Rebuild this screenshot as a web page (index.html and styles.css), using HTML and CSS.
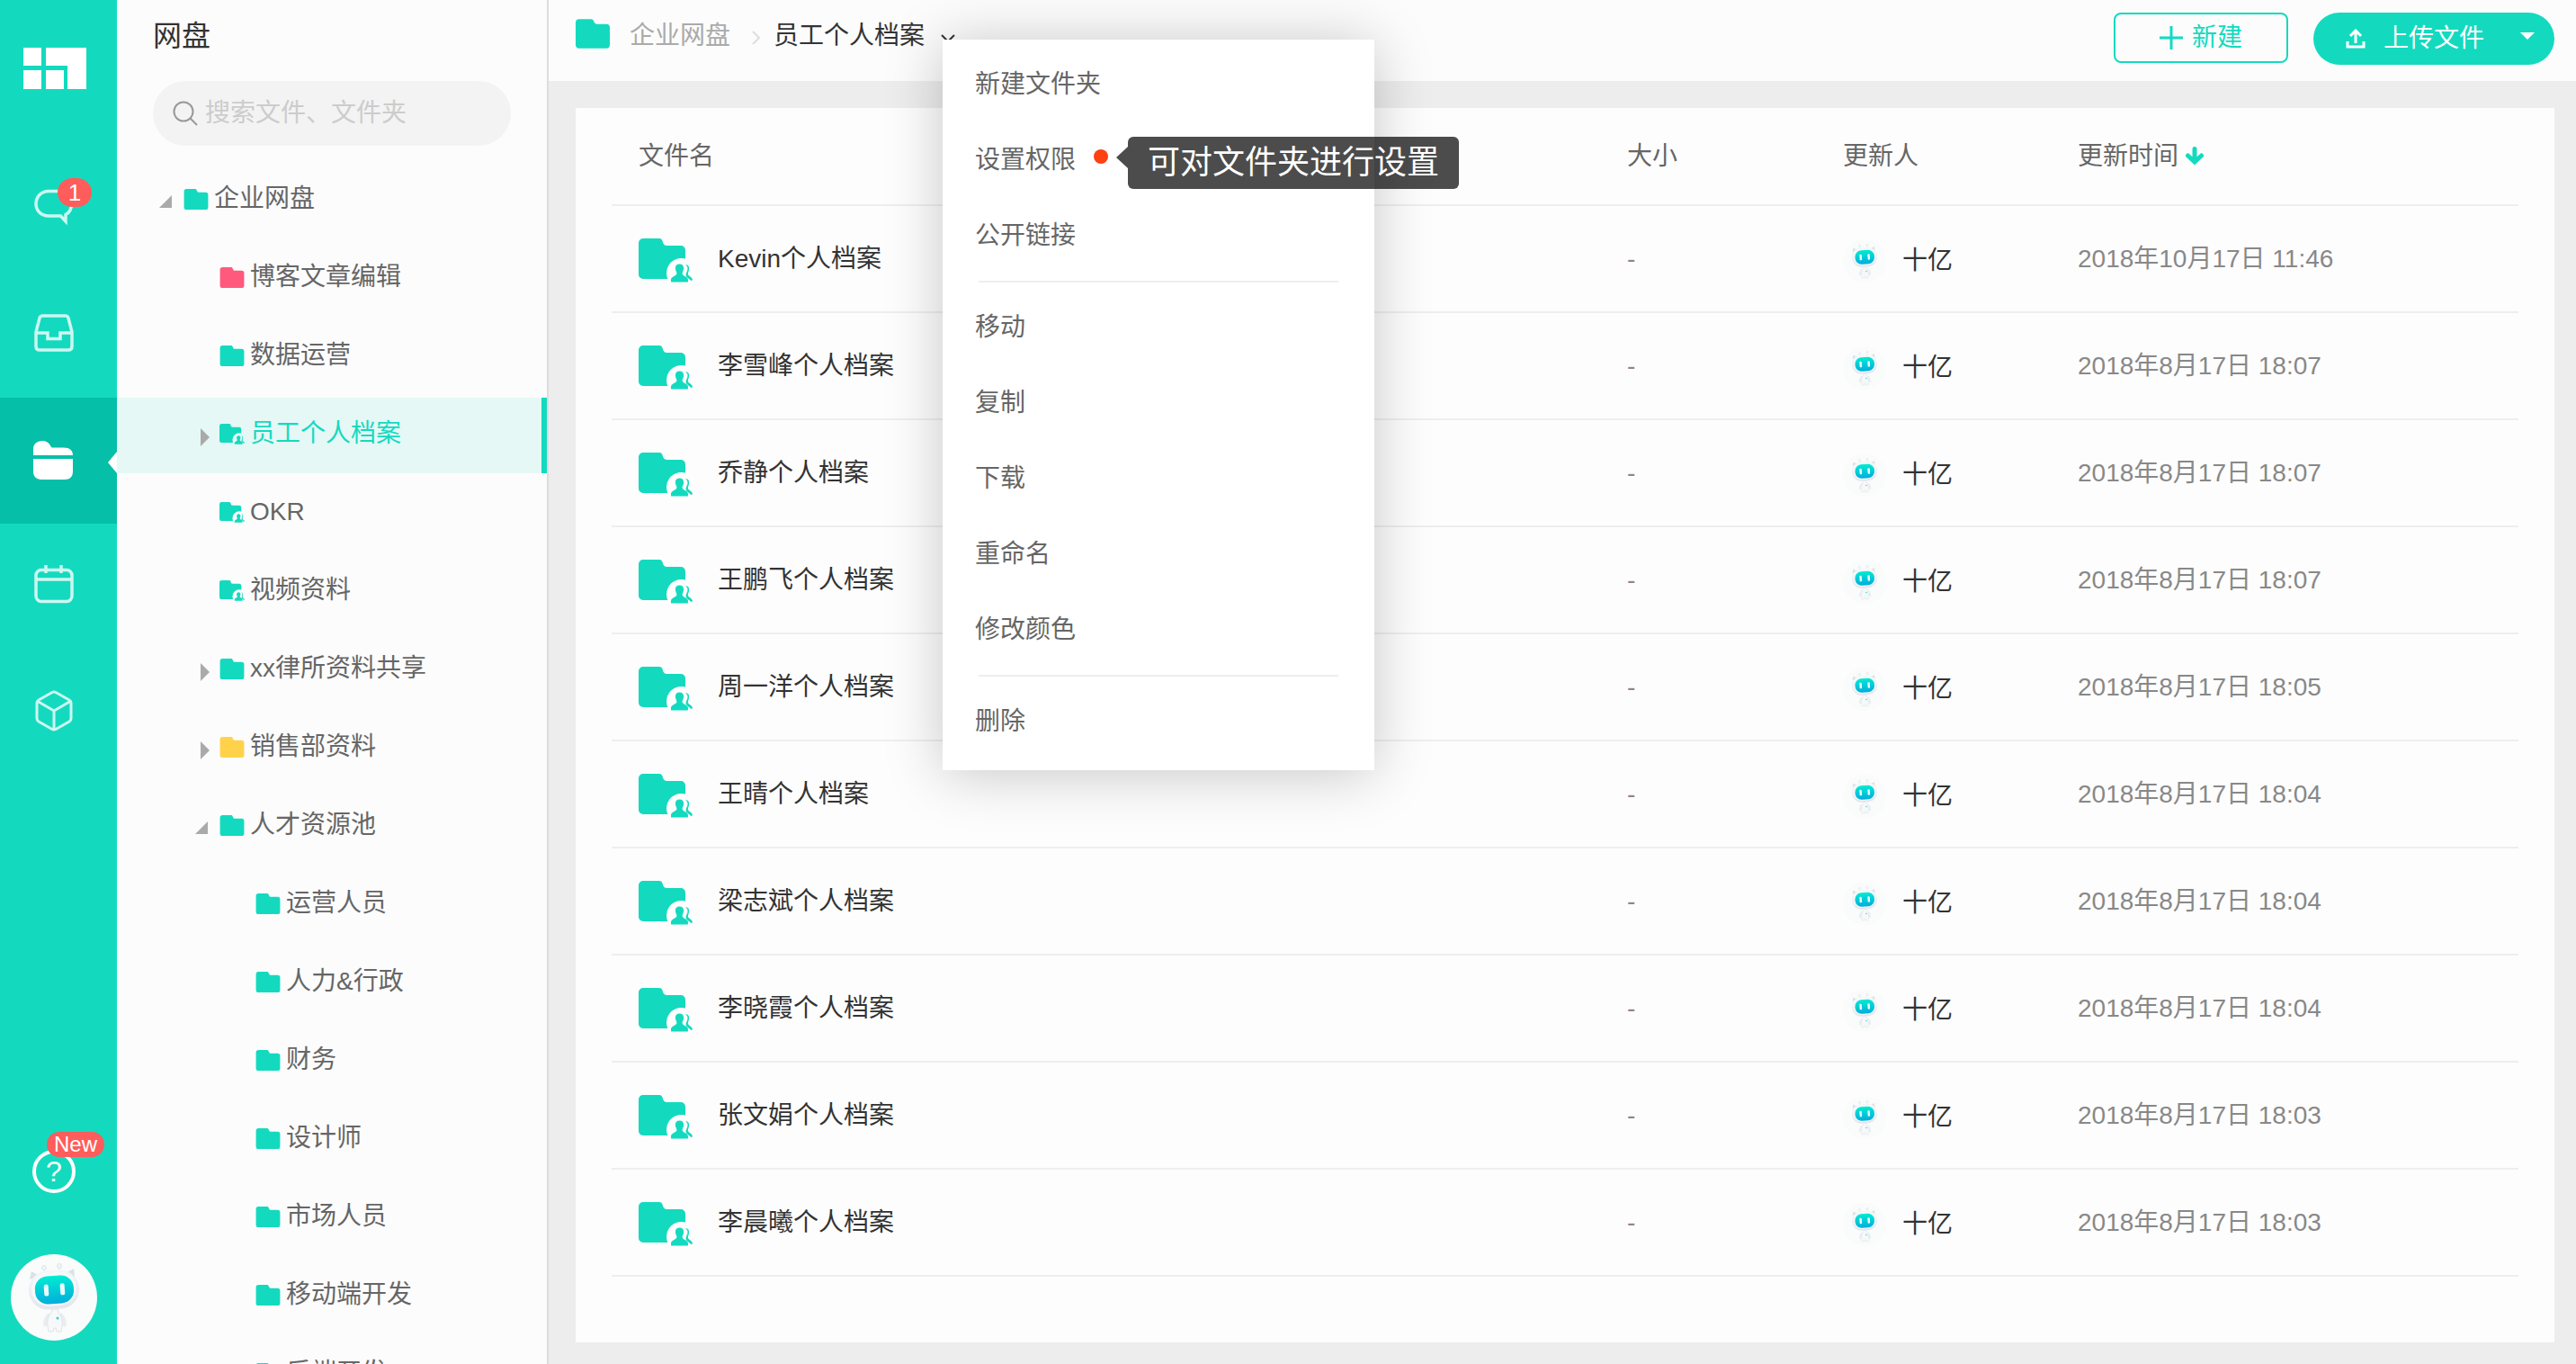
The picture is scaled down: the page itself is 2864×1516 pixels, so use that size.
FILE: index.html
```html
<!DOCTYPE html>
<html lang="zh-CN">
<head>
<meta charset="utf-8">
<meta name="viewport" content="width=device-width, initial-scale=1">
<title>网盘</title>
<link rel="stylesheet" href="styles.css">
</head>
<body>
<svg class="sprite" aria-hidden="true">
  <symbol id="i-folder" viewBox="0 0 28 24">
    <path d="M3 0h9.500c1.500 0 2 .6 2.500 2 .5 1.400 1.200 2 2.500 2H25a3 3 0 0 1 3 3v14a3 3 0 0 1-3 3H3a3 3 0 0 1-3-3V3a3 3 0 0 1 3-3z" fill="currentColor"/>
  </symbol>
  <symbol id="i-shared" viewBox="0 0 60 49">
    <path d="M5 0h18c2 0 3 1 3.700 3.200C27.600 6.500 29 8 31.500 8H47a5 5 0 0 1 5 5v32H5a5 5 0 0 1-5-5V5a5 5 0 0 1 5-5z" fill="currentColor"/>
    <circle class="cut" cx="47.500" cy="38.500" r="16.500"/>
    <path d="M52 29c3.500.2 4.700 2.800 4 6-.4 1.700-1.100 3-1.100 4.600 0 2.400 4.500 2.800 5.100 6.400l-1.500 1.200c-1.900-2.600-6-3.600-6-6.700 0-2.200 2.200-4.300 2-7.200-.1-1.800-.9-3.200-2.500-4.300z" fill="currentColor"/>
    <path d="M45.500 28.500c3.300 0 4.800 2.200 4.600 5-.1 2.200-1.300 3.500-1.500 5-.3 3.600 6.100 3 6.400 7.500 0 1.700 0 2.500-.5 2.500h-18c-.5 0-.6-.8-.5-2.500.3-4.500 6.700-3.900 6.400-7.500-.2-1.500-1.400-2.800-1.500-5-.2-2.800 1.300-5 4.600-5z" fill="currentColor"/>
  </symbol>
  <symbol id="i-open" viewBox="0 0 18 28"><path d="M15 10v14H1z" fill="currentColor"/></symbol>
  <symbol id="i-closed" viewBox="0 0 18 28"><path d="M7 8l10 10L7 28z" fill="currentColor"/></symbol>
  <linearGradient id="face" x1="0" y1="0" x2="0" y2="1">
    <stop offset="0" stop-color="#00ecd2"/><stop offset="1" stop-color="#02addb"/>
  </linearGradient>
  <linearGradient id="head" x1="0" y1="0" x2="0" y2="1">
    <stop offset="0" stop-color="#f4f6f8"/><stop offset="1" stop-color="#e3e6ee"/>
  </linearGradient>
  <symbol id="i-robot" viewBox="0 0 96 96">
    <circle cx="48" cy="48" r="48" fill="#fafbfb"/>
    <g fill="#d9e2e4"><path d="M21 28l2-9 9 5zM71 25l-1-9-9 5z"/></g>
    <g stroke="#e1e5e8" stroke-width="1" fill="#f2f4f6"><path d="M38 21l-1-4M54 18v-4"/><circle cx="37" cy="15" r="2.500"/><circle cx="54" cy="13" r="2.500"/></g>
    <g fill="#e9edf0">
      <ellipse cx="40" cy="73" rx="3" ry="8" transform="rotate(20 40 73)"/>
      <ellipse cx="58" cy="73" rx="3" ry="8" transform="rotate(-20 58 73)"/>
    </g>
    <path d="M46 61h6l1 4c4 4 5 11 4 15l-1 6h-5l-1-4h-2l-1 4h-5l-1-6c-1-4 0-11 4-15z" fill="#f6f8f9" stroke="#dfe4e7"/>
    <circle cx="52" cy="71" r="1.500" fill="#37cfd6"/>
    <g transform="rotate(-4 48 40)">
      <rect x="20" y="18" width="56" height="43" rx="21" fill="url(#head)"/>
      <rect x="23" y="20" width="50" height="37" rx="18" fill="#f7f8fb"/>
      <rect x="27" y="24" width="43" height="31" rx="14" fill="url(#face)"/>
      <rect x="37" y="33" width="5" height="13" rx="2" fill="#eafafe"/>
      <rect x="55" y="33" width="5" height="13" rx="2" fill="#eafafe"/>
    </g>
  </symbol>
</svg>

<div class="app">
  <nav class="rail" aria-label="主导航">
    <a class="logo" href="#" aria-label="首页">
      <svg width="70" height="46" viewBox="0 0 70 46" fill="#fff"><path d="M0 0h20v20H0zM0 25h20v21H0zM25 25h20v21H25zM25 0h45v46H49V20H25z"/></svg>
    </a>
    <a class="rail-item" href="#" aria-label="消息">
      <span class="rail-icon">
        <svg width="48" height="48" viewBox="0 0 48 48" fill="none" stroke="#cdf7f1" stroke-width="3.500"><path d="M18 6.500h12c9 0 13.500 6 13.500 13.500 0 6-2.500 10.500-6.500 12.500V40l-5.500-6H18C9.500 34 4 28 4 20.500S9.500 6.500 18 6.500z"/></svg>
        <span class="badge badge-count">1</span>
      </span>
    </a>
    <a class="rail-item" href="#" aria-label="收件箱">
      <svg width="48" height="48" viewBox="0 0 48 48" fill="none" stroke="#cdf7f1" stroke-width="3.500"><path d="M11.500 5h25c2 0 3 1 3.500 2.500L44 23v16c0 2.500-1.500 4-4 4H8c-2.500 0-4-1.500-4-4V23L8 7.500C8.500 6 9.500 5 11.500 5zM4 24h13v6.500h14V24h13"/></svg>
    </a>
    <a class="rail-item rail-item-active" href="#" aria-label="网盘" aria-current="page">
      <svg width="48" height="48" viewBox="0 0 48 48" fill="#fff"><path d="M1 20V13C1 7.500 5 4 11 4c5 0 7.500 2.500 9.500 6 .5 1 1 1.500 2 1.500H35c6.500 0 10 3 10 8.500zM1 24h44v14c0 6-3.500 9-9 9H10c-6 0-9-3.500-9-9z"/></svg>
    </a>
    <a class="rail-item" href="#" aria-label="日历">
      <svg width="48" height="48" viewBox="0 0 48 48" fill="none" stroke="#cdf7f1" stroke-width="3.500"><rect x="4" y="7.500" width="40" height="35" rx="6"/><path d="M4 18h40M15 2v9M32 2v9"/></svg>
    </a>
    <a class="rail-item" href="#" aria-label="应用">
      <svg width="48" height="48" viewBox="0 0 48 48" fill="none" stroke="#cdf7f1" stroke-width="3" stroke-linejoin="round"><path d="M22 3.500c1.300-.7 2.700-.7 4 0L41 12c1.500 1 2 2 2 3.500v17c0 1.500-.5 2.500-2 3.500l-15 8.500c-1.300.7-2.700.7-4 0L7 36c-1.500-1-2-2-2-3.500v-17C5 14 5.500 13 7 12zM6 13.500L24 24l18-10.500M24 24v20.500"/></svg>
    </a>
    <a class="help" href="#" aria-label="帮助">
      <span class="help-mark">?</span>
      <span class="badge badge-new">New</span>
    </a>
    <a class="me" href="#" aria-label="我的账户"><svg width="96" height="96"><use href="#i-robot"/></svg></a>
  </nav>

  <aside class="sidebar">
    <h1>网盘</h1>
    <label class="search">
      <svg width="28" height="28" viewBox="0 0 28 28" fill="none" stroke="#999" stroke-width="2"><circle cx="12" cy="12" r="10.500"/><path d="M19.500 19.500l7.500 7.500"/></svg>
      <input type="search" placeholder="搜索文件、文件夹" aria-label="搜索文件、文件夹">
    </label>
    <ul class="tree">
      <li><a class="node" href="#"><svg class="twist"><use href="#i-open"/></svg><svg class="ico"><use href="#i-folder"/></svg>企业网盘</a></li>
      <li><a class="node level-1 pink" href="#"><svg class="twist"></svg><svg class="ico"><use href="#i-folder"/></svg>博客文章编辑</a></li>
      <li><a class="node level-1" href="#"><svg class="twist"></svg><svg class="ico"><use href="#i-folder"/></svg>数据运营</a></li>
      <li><a class="node level-1 selected" href="#" aria-current="true"><svg class="twist"><use href="#i-closed"/></svg><svg class="ico"><use href="#i-shared"/></svg>员工个人档案</a></li>
      <li><a class="node level-1" href="#"><svg class="twist"></svg><svg class="ico"><use href="#i-shared"/></svg>OKR</a></li>
      <li><a class="node level-1" href="#"><svg class="twist"></svg><svg class="ico"><use href="#i-shared"/></svg>视频资料</a></li>
      <li><a class="node level-1" href="#"><svg class="twist"><use href="#i-closed"/></svg><svg class="ico"><use href="#i-folder"/></svg>xx律所资料共享</a></li>
      <li><a class="node level-1 yellow" href="#"><svg class="twist"><use href="#i-closed"/></svg><svg class="ico"><use href="#i-folder"/></svg>销售部资料</a></li>
      <li><a class="node level-1" href="#"><svg class="twist"><use href="#i-open"/></svg><svg class="ico"><use href="#i-folder"/></svg>人才资源池</a></li>
      <li><a class="node level-2" href="#"><svg class="twist"></svg><svg class="ico"><use href="#i-folder"/></svg>运营人员</a></li>
      <li><a class="node level-2" href="#"><svg class="twist"></svg><svg class="ico"><use href="#i-folder"/></svg>人力&amp;行政</a></li>
      <li><a class="node level-2" href="#"><svg class="twist"></svg><svg class="ico"><use href="#i-folder"/></svg>财务</a></li>
      <li><a class="node level-2" href="#"><svg class="twist"></svg><svg class="ico"><use href="#i-folder"/></svg>设计师</a></li>
      <li><a class="node level-2" href="#"><svg class="twist"></svg><svg class="ico"><use href="#i-folder"/></svg>市场人员</a></li>
      <li><a class="node level-2" href="#"><svg class="twist"></svg><svg class="ico"><use href="#i-folder"/></svg>移动端开发</a></li>
      <li><a class="node level-2" href="#"><svg class="twist"></svg><svg class="ico"><use href="#i-folder"/></svg>后端开发</a></li>
    </ul>
  </aside>

  <main class="main">
    <header class="topbar">
      <nav class="crumbs" aria-label="路径">
        <svg class="crumb-folder" width="38" height="33"><use href="#i-folder"/></svg>
        <a class="crumb-parent" href="#">企业网盘</a>
        <svg class="crumb-sep" width="10" height="16" viewBox="0 0 10 16" fill="none" stroke="#ddd" stroke-width="2"><path d="M1 1l7 7-7 7"/></svg>
        <div class="crumb-current">
          <button class="crumb-button" type="button" aria-expanded="true">员工个人档案
            <svg width="16" height="10" viewBox="0 0 16 10" fill="none" stroke="#333" stroke-width="2"><path d="M1 1l7 7 7-7"/></svg>
          </button>
          <div class="menu">
            <button type="button">新建文件夹</button>
            <button type="button">设置权限<span class="dot"></span><span class="tip" role="tooltip">可对文件夹进行设置</span></button>
            <button type="button">公开链接</button>
            <hr>
            <button type="button">移动</button>
            <button type="button">复制</button>
            <button type="button">下载</button>
            <button type="button">重命名</button>
            <button type="button">修改颜色</button>
            <hr>
            <button type="button">删除</button>
          </div>
        </div>
      </nav>
      <div class="actions">
        <button class="btn-new" type="button">
          <svg width="26" height="26" viewBox="0 0 26 26" stroke="currentColor" stroke-width="3"><path d="M13 0v26M0 13h26"/></svg>新建
        </button>
        <button class="btn-upload" type="button">
          <svg width="22" height="22" viewBox="0 0 22 22" fill="none" stroke="currentColor" stroke-width="3"><path d="M2 14v6h18v-6M11 16V3M5 8l6-6 6 6"/></svg>
          <span>上传文件</span>
          <svg class="caret" width="16" height="8" viewBox="0 0 16 8" fill="currentColor"><path d="M0 0h16L8 8z"/></svg>
        </button>
      </div>
    </header>

    <section class="panel">
      <table class="files">
        <colgroup><col><col class="col-size"><col class="col-by"><col class="col-time"></colgroup>
        <thead>
          <tr><th class="name">文件名</th><th>大小</th><th>更新人</th><th>更新时间 <svg class="sort" width="20" height="20" viewBox="0 0 20 20" fill="none" stroke="currentColor" stroke-width="5" stroke-linecap="round"><path d="M10 2.500v12M2.500 10l7.500 7 7.500-7"/></svg></th></tr>
        </thead>
        <tbody>
          <tr><td class="name"><a href="#"><svg><use href="#i-shared"/></svg>Kevin个人档案</a></td><td>-</td><td><span class="by"><svg><use href="#i-robot"/></svg>十亿</span></td><td>2018年10月17日 11:46</td></tr>
          <tr><td class="name"><a href="#"><svg><use href="#i-shared"/></svg>李雪峰个人档案</a></td><td>-</td><td><span class="by"><svg><use href="#i-robot"/></svg>十亿</span></td><td>2018年8月17日 18:07</td></tr>
          <tr><td class="name"><a href="#"><svg><use href="#i-shared"/></svg>乔静个人档案</a></td><td>-</td><td><span class="by"><svg><use href="#i-robot"/></svg>十亿</span></td><td>2018年8月17日 18:07</td></tr>
          <tr><td class="name"><a href="#"><svg><use href="#i-shared"/></svg>王鹏飞个人档案</a></td><td>-</td><td><span class="by"><svg><use href="#i-robot"/></svg>十亿</span></td><td>2018年8月17日 18:07</td></tr>
          <tr><td class="name"><a href="#"><svg><use href="#i-shared"/></svg>周一洋个人档案</a></td><td>-</td><td><span class="by"><svg><use href="#i-robot"/></svg>十亿</span></td><td>2018年8月17日 18:05</td></tr>
          <tr><td class="name"><a href="#"><svg><use href="#i-shared"/></svg>王晴个人档案</a></td><td>-</td><td><span class="by"><svg><use href="#i-robot"/></svg>十亿</span></td><td>2018年8月17日 18:04</td></tr>
          <tr><td class="name"><a href="#"><svg><use href="#i-shared"/></svg>梁志斌个人档案</a></td><td>-</td><td><span class="by"><svg><use href="#i-robot"/></svg>十亿</span></td><td>2018年8月17日 18:04</td></tr>
          <tr><td class="name"><a href="#"><svg><use href="#i-shared"/></svg>李晓霞个人档案</a></td><td>-</td><td><span class="by"><svg><use href="#i-robot"/></svg>十亿</span></td><td>2018年8月17日 18:04</td></tr>
          <tr><td class="name"><a href="#"><svg><use href="#i-shared"/></svg>张文娟个人档案</a></td><td>-</td><td><span class="by"><svg><use href="#i-robot"/></svg>十亿</span></td><td>2018年8月17日 18:03</td></tr>
          <tr><td class="name"><a href="#"><svg><use href="#i-shared"/></svg>李晨曦个人档案</a></td><td>-</td><td><span class="by"><svg><use href="#i-robot"/></svg>十亿</span></td><td>2018年8月17日 18:03</td></tr>
        </tbody>
      </table>
    </section>
  </main>
</div>
</body>
</html>
```

FILE: styles.css
```css
:root {
  --teal: #13dabf;
  --teal-dark: #05bfa8;
  --red: #ff5c5c;
  --surface: #fcfcfc;
  --line: #eee;
  --text: #333;
  --text-2: #666;
  --text-3: #888;
}

* { box-sizing: border-box; }

body {
  margin: 0;
  font: 28px/40px "Liberation Sans", "Noto Sans CJK SC", sans-serif;
  color: var(--text);
  background: #ededed;
}

a { color: inherit; text-decoration: none; }
button { font: inherit; color: inherit; background: none; border: 0; padding: 0; cursor: pointer; }
svg { display: block; flex: none; }
.sprite { position: absolute; width: 0; height: 0; }
.cut { fill: var(--cut, var(--surface)); }

.app { display: flex; height: 100vh; overflow: hidden; }

/* Icon rail */
.rail {
  flex: none;
  width: 130px;
  display: flex;
  flex-direction: column;
  background: var(--teal);
  padding-bottom: 26px;
}
.logo { height: 162px; padding: 53px 0 0 26px; }
.rail-item {
  height: 140px;
  padding: 0 10px 4px 0;
  display: flex;
  align-items: center;
  justify-content: center;
}
.rail-icon { position: relative; }
.rail-item-active { position: relative; background: var(--teal-dark); }
.rail-item-active::after {
  content: "";
  position: absolute;
  right: 0;
  top: 60px;
  border: solid transparent;
  border-width: 12px 10px 12px 0;
  border-right-color: #fff;
}
.badge {
  position: absolute;
  background: var(--red);
  color: #fff;
  border-radius: 16px;
  text-align: center;
}
.badge-count { left: 28px; top: -8px; width: 38px; font-size: 26px; line-height: 32px; }
.badge-new { left: 16px; top: -20px; width: 64px; font-size: 24px; line-height: 28px; }
.help { position: relative; width: 48px; margin: auto 0 68px 36px; }
.help-mark {
  display: block;
  border: 4px solid #fff;
  border-radius: 50%;
  color: #fff;
  font-size: 32px;
  line-height: 40px;
  text-align: center;
}
.me { margin-left: 12px; }

/* Folder tree */
.sidebar {
  flex: none;
  width: 480px;
  background: var(--surface);
  border-right: 2px solid #ddd;
}
.sidebar h1 { margin: 20px 40px 30px; font-size: 32px; font-weight: 400; line-height: 40px; }
.search {
  display: flex;
  align-items: center;
  gap: 8px;
  height: 72px;
  margin: 0 40px 19px;
  padding: 0 22px;
  border-radius: 36px;
  background: #f3f3f3;
}
.search input {
  flex: 1;
  min-width: 0;
  padding: 0;
  border: 0;
  background: none;
  font: inherit;
  color: var(--text);
}
.search input::placeholder { color: #ccc; }
.tree { list-style: none; margin: 0; padding: 0; display: grid; gap: 3px; }
.node {
  display: flex;
  align-items: center;
  height: 84px;
  padding: 0 0 4px 46px;
  color: var(--text-2);
}
.level-1 { padding-left: 86px; }
.level-2 { padding-left: 126px; }
.twist { width: 18px; height: 28px; margin-right: 10px; color: #aaa; }
.ico { width: 28px; height: 23px; margin-right: 6px; color: var(--teal); }
.pink .ico { color: #ff5a7d; }
.yellow .ico { color: #ffd24a; }
.selected { --cut: #e5f8f6; background: #e5f8f6; color: var(--teal); border-right: 6px solid var(--teal); }

/* Top bar */
.main { flex: 1; min-width: 0; display: flex; flex-direction: column; }
.topbar {
  display: flex;
  justify-content: space-between;
  height: 90px;
  padding: 14px 24px 0 30px;
  background: var(--surface);
}
.crumbs { display: flex; align-items: center; height: 56px; padding-bottom: 4px; }
.crumb-folder { color: var(--teal); margin: 0 22px 6px 0; }
.crumb-parent { color: #aaa; }
.crumb-sep { margin: 4px 14px 0 24px; }
.crumb-current { position: relative; }
.crumb-button { display: flex; align-items: center; gap: 18px; }
.crumb-button svg { margin-top: 6px; }
.actions { display: flex; align-items: flex-start; gap: 28px; }
.btn-new {
  display: flex;
  align-items: center;
  justify-content: center;
  gap: 10px;
  width: 194px;
  height: 56px;
  border: 2px solid var(--teal);
  border-radius: 8px;
  color: var(--teal);
}
.btn-upload {
  display: flex;
  align-items: center;
  gap: 20px;
  height: 58px;
  padding: 0 22px 0 36px;
  border-radius: 29px;
  background: var(--teal);
  color: #fff;
}
.caret { margin: 0 0 6px 20px; }

/* Folder menu */
.menu {
  position: absolute;
  z-index: 2;
  left: 188px;
  top: 24px;
  width: 480px;
  padding: 8px 0 12px;
  background: #fff;
  box-shadow: 0 4px 60px rgba(0, 0, 0, .22);
  color: var(--text-2);
}
.menu button {
  position: relative;
  display: flex;
  align-items: center;
  width: 100%;
  height: 84px;
  padding-left: 36px;
}
.menu hr { height: 2px; margin: 8px 40px; border: 0; background: var(--line); }
.dot { width: 16px; height: 16px; margin: 0 0 8px 20px; border-radius: 50%; background: #ff4010; }
.tip {
  position: absolute;
  left: 206px;
  top: 16px;
  padding: 0 22px;
  border-radius: 6px;
  background: rgba(0, 0, 0, .7);
  color: #fff;
  font-size: 36px;
  line-height: 58px;
  white-space: nowrap;
}
.tip::before {
  content: "";
  position: absolute;
  right: 100%;
  top: 11px;
  border: solid transparent;
  border-width: 12px 13px 12px 0;
  border-right-color: rgba(0, 0, 0, .7);
}

/* File list */
.panel { flex: 1; margin: 30px 24px 24px 30px; padding: 0 40px; background: #fdfdfd; --cut: #fdfdfd; }
.files { width: 100%; table-layout: fixed; border-collapse: collapse; }
.col-size { width: 240px; }
.col-by { width: 261px; }
.col-time { width: 490px; }
.files th, .files td { padding: 0; height: 119px; border-bottom: 2px solid var(--line); text-align: left; color: var(--text-3); }
.files th { height: 108px; font-weight: 400; color: var(--text-2); }
.files .name { padding-left: 30px; }
.name a, .by { display: flex; align-items: center; color: var(--text); }
.name a svg { width: 60px; height: 49px; margin: 4px 28px 0 0; color: var(--teal); }
.by { padding-top: 4px; }
.by svg { width: 48px; height: 48px; margin-right: 18px; }
.sort { display: inline-block; color: var(--teal); }
```
